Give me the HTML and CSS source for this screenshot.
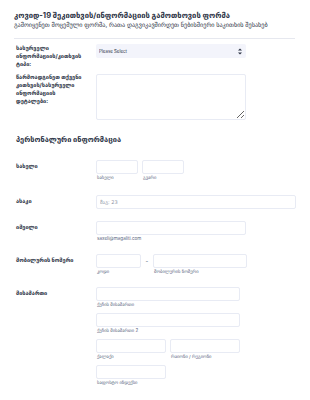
FILE: index.html
```html
<!DOCTYPE html>
<html lang="ka">

<head>
	<meta charset="UTF-8">
	<title>კოვიდ-19 ფორმა</title>
	<link rel="stylesheet" href="styles.css">
</head>

<body>
	<div class="form">
		<div class="form-header">
			<h1>კოვიდ-19 შეკითხვის/ინფორმაციის გამოთხოვის ფორმა</h1>
			<p>გამოიყენეთ მოცემული ფორმა, რათა დაგვიკავშირდეთ ნებისმიერი საკითხის შესახებ</p>
		</div>

		<div class="line">
			<label class="line-label">სასურველი ინფორმაციის/კითხვის ტიპი:</label>
			<div class="line-input">
				<div class="select-wrap">
					<select class="select">
						<option>Please Select</option>
					</select>
					<svg class="select-arrow" width="4" height="7" viewBox="0 0 4 7">
						<path d="M0 2.6 L2 0.4 L4 2.6 Z M0 4.4 L2 6.6 L4 4.4 Z" fill="#2c3345" />
					</svg>
				</div>
			</div>
		</div>

		<div class="line">
			<label class="line-label">წარმოადგინეთ თქვენი კითხვის/სასურველი ინფორმაციის დეტალები:</label>
			<div class="line-input">
				<textarea class="textarea"></textarea>
			</div>
		</div>

		<h2 class="section">პერსონალური ინფორმაცია</h2>

		<div class="line personal first">
			<label class="line-label">სახელი</label>
			<div class="line-input">
				<div class="group">
					<div class="field w42">
						<input type="text">
						<span class="sub">სახელი</span>
					</div>
					<div class="field w42">
						<input type="text">
						<span class="sub">გვარი</span>
					</div>
				</div>
			</div>
		</div>

		<div class="line personal age">
			<label class="line-label">ასაკი</label>
			<div class="line-input">
				<input type="text" class="w73" placeholder="მაგ: 23">
			</div>
		</div>

		<div class="line personal">
			<label class="line-label">იმეილი</label>
			<div class="line-input">
				<div class="field w150">
					<input type="text">
					<span class="sub">saxeli@magaliti.com</span>
				</div>
			</div>
		</div>

		<div class="line personal">
			<label class="line-label">მობილურის ნომერი</label>
			<div class="line-input">
				<div class="group">
					<div class="field w45">
						<input type="text">
						<span class="sub">კოდი</span>
					</div>
					<span class="dash">-</span>
					<div class="field w94">
						<input type="text">
						<span class="sub">მობილურის ნომერი</span>
					</div>
				</div>
			</div>
		</div>

		<div class="line personal">
			<label class="line-label">მისამართი</label>
			<div class="line-input address">
				<div class="field w144">
					<input type="text">
					<span class="sub">ქუჩის მისამართი</span>
				</div>
				<div class="field w144">
					<input type="text">
					<span class="sub">ქუჩის მისამართი 2</span>
				</div>
				<div class="group">
					<div class="field w70">
						<input type="text">
						<span class="sub">ქალაქი</span>
					</div>
					<div class="field w70">
						<input type="text">
						<span class="sub">რაიონი / რეგიონი</span>
					</div>
				</div>
				<div class="field w70">
					<input type="text">
					<span class="sub">საფოსტო ინდექსი</span>
				</div>
			</div>
		</div>
	</div>
</body>

</html>
```

FILE: styles.css
```css
body {
	font-family: Inter, "DejaVu Sans", sans-serif;
	margin: 0;
	padding: 0;
	background-color: #ffffff;
	color: #2c3345;
}

.form {
	padding: 10px 14px 0 14px;
}

.form-header {
	padding-bottom: 9px;
	border-bottom: 1px solid #e6e8ef;
	margin-right: 1px;
}

.form-header h1 {
	margin: 0;
	font-size: 7.6px;
	font-weight: bold;
	line-height: 11px;
}

.form-header p {
	margin: 0;
	font-size: 6.2px;
	line-height: 8px;
	color: #2c3345;
}

.line {
	display: flex;
	padding-left: 2px;
	margin-top: 5px;
}

.line-label {
	width: 80px;
	flex-shrink: 0;
	font-size: 5.6px;
	font-weight: bold;
	line-height: 8px;
	padding-right: 8px;
	box-sizing: border-box;
}

.line-input {
	flex: 1;
}

.personal {
	margin-top: 12px;
}

.personal .line-label {
	padding-top: 2px;
}

.personal.first {
	margin-top: 0;
}

.personal.age {
	margin-top: 14px;
}

.select-wrap {
	position: relative;
	width: 150px;
}

.select {
	appearance: none;
	width: 150px;
	height: 14px;
	border: none;
	border-radius: 2px;
	background: #f3f4fb;
	font-family: Inter, sans-serif;
	font-size: 4.4px;
	color: #2c3345;
	padding: 0 3px;
	display: block;
}

.select-arrow {
	position: absolute;
	right: 4px;
	top: 4px;
}

.textarea {
	display: block;
	width: 150px;
	height: 46px;
	margin-top: 1px;
	box-sizing: border-box;
	border: 1px solid #e8ebf4;
	border-radius: 2px;
	padding: 2px;
}

.section {
	margin: 14px 0 0 2px;
	font-size: 7.4px;
	font-weight: bold;
	line-height: 11px;
	padding-bottom: 15px;
}

input[type="text"] {
	display: block;
	width: 100%;
	height: 14px;
	box-sizing: border-box;
	border: 1px solid #e8ebf4;
	border-radius: 2px;
	padding: 0 3px;
	font-family: "DejaVu Sans", sans-serif;
	font-size: 5px;
	color: #2c3345;
	margin: 0;
}

input::placeholder {
	color: #8f96a8;
}

.group {
	display: flex;
	gap: 4px;
	align-items: flex-start;
}

.field {
	display: flex;
	flex-direction: column;
}

.sub {
	font-size: 4.6px;
	line-height: 6px;
	color: #57647e;
	margin-top: 1px;
	padding-left: 1px;
	min-height: 6px;
}

.dash {
	font-size: 6px;
	line-height: 14px;
	color: #57647e;
	width: 4px;
	text-align: center;
}

.w42 { width: 42px; }
.w45 { width: 45px; }
.w70 { width: 70px; }
.w73 { width: 73px; }
.w94 { width: 94px; }
.w144 { width: 144px; }
.w150 { width: 150px; }

.address {
	display: flex;
	flex-direction: column;
	gap: 5px;
}
```
